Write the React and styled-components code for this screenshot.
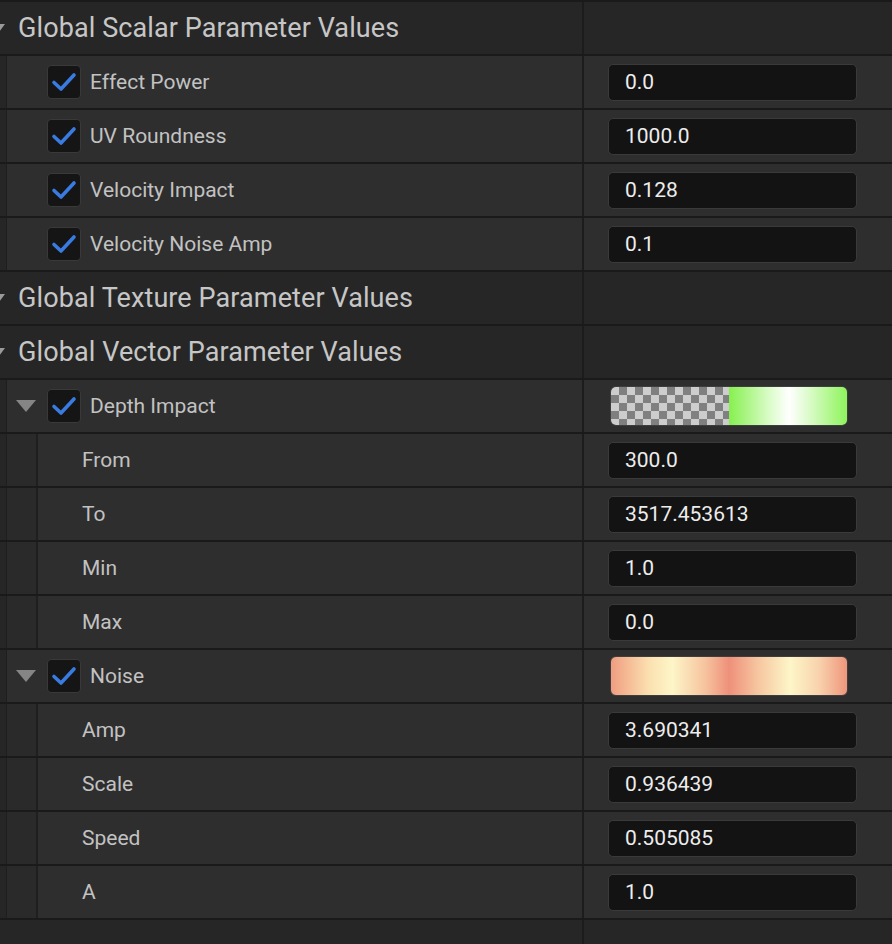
import React from 'react'
import styled, { createGlobalStyle } from 'styled-components'

const GlobalStyle = createGlobalStyle`
    html, body {
        margin: 0;
        padding: 0;
        background: #262626;
    }
    body {
        font-family: Roboto, "Liberation Sans", sans-serif;
    }
`

const Panel = styled.div`
    display: flex;
    flex-direction: column;
    width: 892px;
    height: 944px;
    overflow: hidden;
    background: #262626;
`

const Row = styled.div`
    display: grid;
    grid-template-columns: 584px 1fr;
    height: 52px;
    border-top: 2px solid #1a1a1a;
    background: ${p => p.$header ? '#262626' : '#2e2e2e'};
`

const NameCell = styled.div`
    display: flex;
    align-items: stretch;
    border-right: 2px solid #1c1c1c;
    min-width: 0;
`

const ValueCell = styled.div`
    display: flex;
    align-items: center;
    padding-left: 24px;
`

const Gutter = styled.div`
    width: 6px;
    flex: none;
    background: #262626;
    border-right: 1px solid #1e1e1e;
`

const SubGutter = styled.div`
    width: 29px;
    flex: none;
    background: #2a2a2a;
    border-right: 2px solid #1f1f1f;
`

const Content = styled.div`
    flex: 1;
    display: flex;
    align-items: center;
    padding-left: ${p => p.$pad || 0}px;
`

const HeaderTitle = styled.span`
    font-size: 27px;
    letter-spacing: 0.1px;
    color: #c6c6c6;
    white-space: nowrap;
`

const Caret = styled.svg`
    width: 12px;
    height: 8px;
    margin-left: -7px;
    margin-right: 13px;
    margin-top: -1px;
    flex: none;
`

const ArrowSlot = styled.div`
    width: 31px;
    padding-left: 9px;
    display: flex;
    align-items: center;
    flex: none;
`

const Checkbox = styled.div`
    width: 32px;
    height: 32px;
    border: 1px solid #393939;
    border-radius: 4px;
    background: #151515;
    display: flex;
    align-items: center;
    justify-content: center;
    flex: none;
    margin-right: 9px;
`

const Label = styled.span`
    font-size: 21px;
    color: #c2c2c2;
    white-space: nowrap;
`

const ValueBox = styled.div`
    width: 231px;
    height: 35px;
    padding-left: 16px;
    display: flex;
    align-items: center;
    background: #131313;
    border: 1px solid #3a3a3a;
    border-radius: 5px;
    font-size: 21px;
    color: #ededed;
`

const Swatch = styled.div`
    width: 236px;
    height: 38px;
    margin-left: 2px;
    border: 1px solid #3e3e3e;
    border-radius: 6px;
    overflow: hidden;
    display: flex;
    background: ${p => p.$gradient};
`

const Checker = styled.div`
    width: 50%;
    background-color: #cdcdcd;
    background-image:
        linear-gradient(45deg, #808080 25%, transparent 25%, transparent 75%, #808080 75%),
        linear-gradient(45deg, #808080 25%, transparent 25%, transparent 75%, #808080 75%);
    background-size: 16px 16px;
    background-position: 0 0, 8px 8px;
`

const Fill = styled.div`
    flex: 1;
    background: ${p => p.$gradient};
`

const Filler = styled.div`
    flex: 1;
    display: grid;
    grid-template-columns: 584px 1fr;
    border-top: 2px solid #1a1a1a;

    div {
        border-right: 2px solid #1c1c1c;
    }
`

const Check = () => (
    <svg width="26" height="22" viewBox="0 0 26 22">
        <path d="M3 11.5 L10 18 L23 4" fill="none" stroke="#3a7be2" strokeWidth="3.6" strokeLinecap="round" strokeLinejoin="round" />
    </svg>
)

const Expand = () => (
    <svg width="20" height="12" viewBox="0 0 20 12">
        <path d="M0 0 H20 L10 12 Z" fill="#858585" />
    </svg>
)

const Header = ({ title }) => (
    <Row $header>
        <NameCell>
            <Content>
                <Caret viewBox="0 0 12 8"><path d="M0 0 H12 L6 8 Z" fill="#9a9a9a" /></Caret>
                <HeaderTitle>{title}</HeaderTitle>
            </Content>
        </NameCell>
        <ValueCell />
    </Row>
)

const Param = ({ name, value, expandable, children }) => (
    <Row>
        <NameCell>
            <Gutter />
            <Content>
                <ArrowSlot>{expandable && <Expand />}</ArrowSlot>
                <Checkbox><Check /></Checkbox>
                <Label>{name}</Label>
            </Content>
        </NameCell>
        <ValueCell>
            {children || <ValueBox>{value}</ValueBox>}
        </ValueCell>
    </Row>
)

const Child = ({ name, value }) => (
    <Row>
        <NameCell>
            <Gutter />
            <SubGutter />
            <Content $pad={44}>
                <Label>{name}</Label>
            </Content>
        </NameCell>
        <ValueCell>
            <ValueBox>{value}</ValueBox>
        </ValueCell>
    </Row>
)

const scalars = [
    ['Effect Power', '0.0'],
    ['UV Roundness', '1000.0'],
    ['Velocity Impact', '0.128'],
    ['Velocity Noise Amp', '0.1'],
]

const depth = [['From', '300.0'], ['To', '3517.453613'], ['Min', '1.0'], ['Max', '0.0']]
const noise = [['Amp', '3.690341'], ['Scale', '0.936439'], ['Speed', '0.505085'], ['A', '1.0']]

const greenGradient = 'linear-gradient(90deg, #86f04f 0%, #dcfccb 35%, #ffffff 51%, #d6fbc2 70%, #8ef45c 100%)'
const noiseGradient = 'linear-gradient(90deg, #f09d80 0%, #fbe0b0 16%, #fdf6c8 26%, #f6c39e 40%, #ee907a 50%, #f6c59f 62%, #fdf6c8 76%, #f8d3ad 88%, #ef967c 100%)'

export default function App() {
    return (
        <>
            <GlobalStyle />
            <Panel>
                <Header title="Global Scalar Parameter Values" />
                {scalars.map(([n, v]) => <Param key={n} name={n} value={v} />)}
                <Header title="Global Texture Parameter Values" />
                <Header title="Global Vector Parameter Values" />
                <Param name="Depth Impact" expandable>
                    <Swatch>
                        <Checker />
                        <Fill $gradient={greenGradient} />
                    </Swatch>
                </Param>
                {depth.map(([n, v]) => <Child key={n} name={n} value={v} />)}
                <Param name="Noise" expandable>
                    <Swatch $gradient={noiseGradient} />
                </Param>
                {noise.map(([n, v]) => <Child key={n} name={n} value={v} />)}
                <Filler><div /></Filler>
            </Panel>
        </>
    )
}
